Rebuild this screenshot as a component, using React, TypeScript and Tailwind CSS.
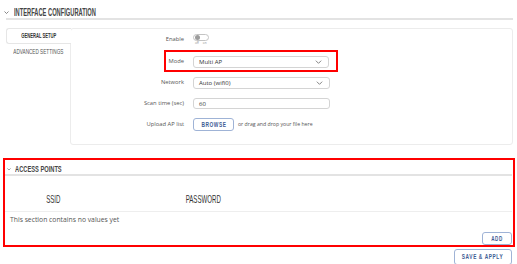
import React from "react";

const H = "font-['Liberation_Sans',Arial,sans-serif] inline-block whitespace-nowrap leading-none";

function Chevron({ size = 6 }: { size?: number }) {
  return (
    <svg width={size} height={size * 0.6} viewBox="0 0 10 6" className="block">
      <path d="M1 1 L5 5 L9 1" fill="none" stroke="#555" strokeWidth="1.4" />
    </svg>
  );
}

function SelectBox({ value, width }: { value: string; width: string }) {
  return (
    <div className={`${width} h-[12px] border border-[#d4d4d4] rounded-[3px] flex items-center justify-between pl-[5px] pr-[6px] bg-white`}>
      <span className="text-[6px] text-[#333] font-['Open_Sans',sans-serif] leading-none">{value}</span>
      <svg width="7" height="4" viewBox="0 0 10 6">
        <path d="M1 1 L5 5 L9 1" fill="none" stroke="#666" strokeWidth="1.2" />
      </svg>
    </div>
  );
}

const label = "text-right text-[5.8px] text-[#555] font-['Open_Sans',sans-serif] leading-none whitespace-nowrap";

export default function App() {
  return (
    <div className="w-[517px] h-[264px] bg-white overflow-hidden font-['Open_Sans',sans-serif]">
      {/* Interface configuration header */}
      <div className="pt-[6px] pl-[4px] flex items-center gap-[5px] h-[18px]">
        <Chevron size={5} />
        <span className={`${H} font-semibold text-[11px] text-[#454545] scale-x-[0.52] origin-left`}>INTERFACE CONFIGURATION</span>
      </div>
      <div className="ml-[6px] mr-[4px] h-[2px] bg-[#e3e3e3]" />

      {/* Tabs + content */}
      <div className="flex ml-[6px] mr-[4px] mt-[8px]">
        <div className="w-[64px] shrink-0 flex flex-col">
          <div className="relative z-10 -mr-px h-[16px] bg-white border border-r-0 border-[#e6e6e6] rounded-l-[3px] flex items-center justify-center">
            <span className={`${H} font-semibold text-[7.5px] text-[#333] scale-x-[0.55] origin-center`}>GENERAL SETUP</span>
          </div>
          <div className="h-[16px] flex items-center justify-center">
            <span className={`${H} text-[7.5px] text-[#555] scale-x-[0.62] origin-center`}>ADVANCED SETTINGS</span>
          </div>
        </div>
        <div className="relative flex-1 h-[117px] border border-[#ececec] rounded-[3px] bg-white">
          {/* Mode red annotation */}
          <div className="absolute left-[93px] top-[21px] w-[174px] h-[22px] border-2 border-[#f00] pointer-events-none" />
          <div className="grid grid-cols-[113px_1fr] gap-x-[9px] items-center pt-[5px]">
            <div className={`${label} relative top-[1px]`}>Enable</div>
            <div className="flex flex-col h-[10px]">
              <div className="w-[16px] h-[7px] rounded-full border border-[#c4c4c4] bg-white flex items-center pl-[1px]">
                <div className="w-[5px] h-[5px] rounded-full bg-[#9c9c9c]" />
              </div>
              <div className="flex gap-[4px] pl-[2px] text-[3px] leading-none text-[#888] mt-[1px]">
                <span>off</span>
                <span>on</span>
              </div>
            </div>

            <div className={`${label} mt-[12px]`}>Mode</div>
            <div className="mt-[12px]">
              <SelectBox value="Multi AP" width="w-[136px]" />
            </div>

            <div className={`${label} mt-[9px]`}>Network</div>
            <div className="mt-[9px]">
              <SelectBox value="Auto (wifi0)" width="w-[137px]" />
            </div>

            <div className={`${label} mt-[9px]`}>Scan time (sec)</div>
            <div className="mt-[9px]">
              <div className="w-[137px] h-[11px] border border-[#d4d4d4] rounded-[3px] flex items-center pl-[5px]">
                <span className="text-[6px] text-[#333] leading-none">60</span>
              </div>
            </div>

            <div className={`${label} mt-[9px]`}>Upload AP list</div>
            <div className="mt-[9px] flex items-center gap-[4px]">
              <div className="w-[41px] h-[13px] border border-[#9fb3d6] rounded-[3px] flex items-center justify-center">
                <span className={`${H} font-bold text-[8px] text-[#3e5c94] scale-x-[0.6] tracking-[1px]`}>BROWSE</span>
              </div>
              <span className="text-[5.2px] text-[#555] leading-none whitespace-nowrap">or drag and drop your file here</span>
            </div>
          </div>
        </div>
      </div>

      {/* Access points (red annotated) */}
      <div className="ml-[3px] mr-[2px] mt-[13px] h-[89px] border-2 border-[#f00] flex flex-col">
        <div className="flex items-center gap-[4px] pl-[2px] pt-[4px] h-[14px]">
          <Chevron size={4} />
          <span className={`${H} font-semibold text-[9.7px] text-[#454545] scale-x-[0.59] origin-left`}>ACCESS POINTS</span>
        </div>
        <div className="mr-[1px] h-[2px] bg-[#e3e3e3]" />
        <div className="flex h-[35px] items-end pb-[7px]">
          <div className="w-[96px] flex justify-center">
            <span className={`${H} text-[10.5px] text-[#333] scale-x-[0.58]`}>SSID</span>
          </div>
          <div className="w-[204px] flex justify-center">
            <span className={`${H} text-[10.5px] text-[#333] scale-x-[0.58]`}>PASSWORD</span>
          </div>
        </div>
        <div className="mr-[1px] h-px bg-[#eeeeee]" />
        <div className="pl-[5px] pt-[5px] text-[6.8px] text-[#555] leading-none">This section contains no values yet</div>
        <div className="flex justify-end pr-[1px] mt-[8px]">
          <div className="w-[30px] h-[13px] border border-[#9fb3d6] rounded-[3px] flex items-center justify-center">
            <span className={`${H} font-bold text-[7px] text-[#3e5c94] scale-x-[0.65] tracking-[1px]`}>ADD</span>
          </div>
        </div>
      </div>

      <div className="flex justify-end mr-[5px] mt-[2px]">
        <div className="w-[58px] h-[16px] border border-[#9fb3d6] rounded-[3px] flex items-center justify-center">
          <span className={`${H} font-bold text-[8px] text-[#3e5c94] scale-x-[0.6] tracking-[1px]`}>SAVE &amp; APPLY</span>
        </div>
      </div>
    </div>
  );
}
